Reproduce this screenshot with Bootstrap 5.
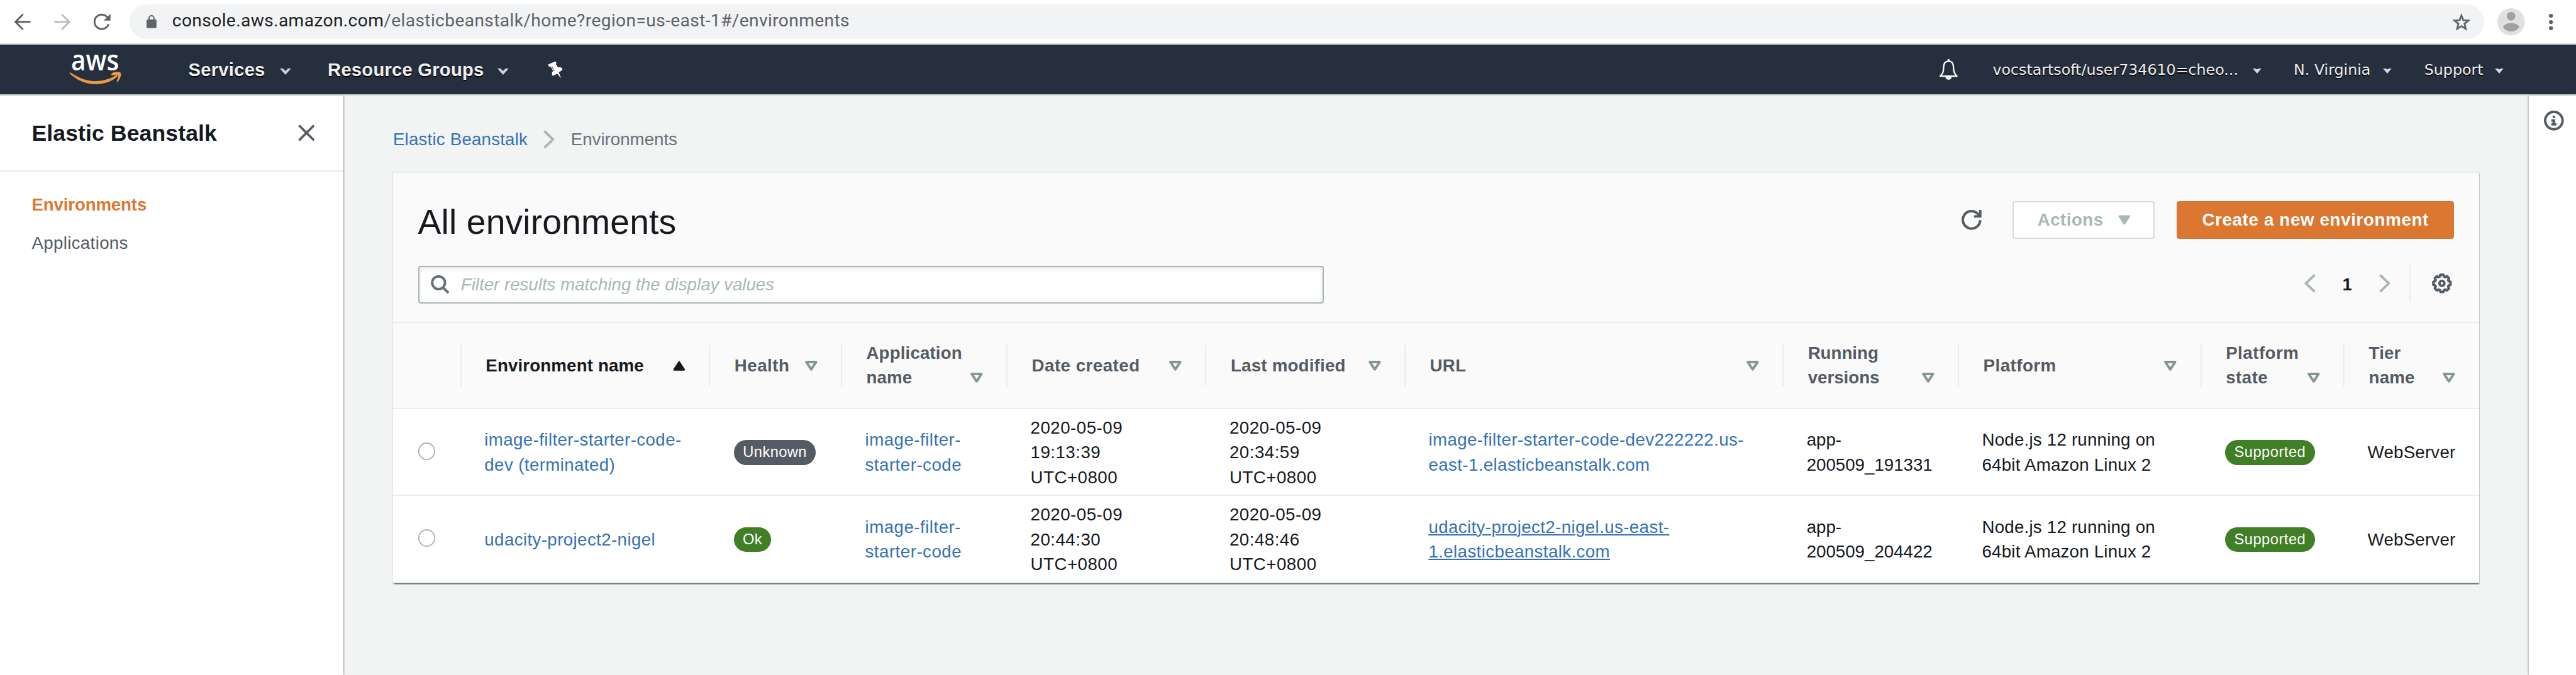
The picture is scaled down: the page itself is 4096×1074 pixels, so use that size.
<!DOCTYPE html>
<html lang="en">
<head>
<meta charset="utf-8">
<title>Elastic Beanstalk - Environments</title>
<link href="https://cdn.jsdelivr.net/npm/bootstrap@5.3.0/dist/css/bootstrap.min.css" rel="stylesheet">
<style>
/* 1rem = ten design pixels */
html{font-size:9.8889px}
body{font:2.8rem/4rem "Liberation Sans",Arial,sans-serif;color:#16191f;background:#f2f3f3;height:100vh;overflow:hidden}
svg{display:block;flex:none;overflow:visible}
a{color:#3571b8;text-decoration:none}
.nw{white-space:nowrap}
.chrome-bar{height:7.2rem;border-bottom:2px solid #d9dce0;background:#fff;padding-left:2.3rem}
.omnibox{margin-left:3rem;width:378.6rem;height:5.6rem;border-radius:2.8rem;background:#f1f3f4;padding-left:2.8rem}
.address{font-family:Roboto,sans-serif;font-size:2.85rem;letter-spacing:.037rem;color:#5f6368;margin-left:2.5rem;padding-bottom:.3rem}
.address b{font-weight:400;color:#202124}
.aws-nav{height:8.2rem;background:#262f3e;border-bottom:2px solid #ced2d0;color:#eee;text-shadow:0 .2rem 0 #000}
.nav-main{font-weight:700;font-size:2.95rem;letter-spacing:.025rem;padding-top:.3rem}
.nav-side{font:2.4rem/4rem "DejaVu Sans",Verdana,sans-serif;padding-top:.2rem}
.side{width:55.2rem;background:#fff;box-shadow:.1rem 0 .2rem #8d9696;z-index:1}
.side-head{height:12.2rem;border-bottom:2px solid #eaeded;padding:0 4.6rem 0 5.1rem}
.side-title{font-size:3.6rem;font-weight:700;letter-spacing:.01rem;padding-top:.3rem}
.side-list{padding:3.3rem 5.1rem;gap:2.2rem}
.side-list .on{color:#dc7732;font-weight:700;letter-spacing:-.015rem}
.side-list .off{color:#545b64;letter-spacing:.035rem}
.tools{width:7.6rem;background:#fff;box-shadow:-.1rem 0 .3rem #8d9696;padding:2.4rem 0 0 2.4rem}
.content{padding:5rem 8rem 0 8rem}
.crumbs{height:4rem}
.panel{margin-top:3.2rem;height:66.2rem;background:#fff;border-top:2px solid #eaeded;box-shadow:0 .2rem .1rem rgba(0,28,36,.4),.15rem .1rem .1rem rgba(0,28,36,.15),-.15rem .1rem .1rem rgba(0,28,36,.15)}
.panel-top{height:24.2rem;background:#fafafa;border-bottom:2px solid #eaeded;padding:4.6rem 4rem 0 4rem}
.title-row{height:6rem}
.panel-title{font-size:5.6rem;line-height:6rem;font-weight:400;margin:0;padding-top:.8rem;letter-spacing:.01rem}
.xbtn{height:6rem;border-radius:.4rem;font-weight:700;font-size:2.8rem;letter-spacing:.05rem}
.btn-act{width:22.8rem;border:2px solid #d5dbdb;background:#fff;color:#aab7b8;padding-left:3.8rem}
.btn-new{width:44.6rem;background:#dc7732;color:#fff;margin-left:3.6rem;letter-spacing:.068rem}
.filter{width:145.7rem;height:6rem;border:2px solid #aab7b8;border-radius:.4rem;background:#fff;box-shadow:inset 0 .2rem .6rem rgba(0,0,0,.1);padding-left:1.9rem;color:#aab7b8;font-style:italic}
.grid{width:335.4rem;table-layout:fixed;border-collapse:separate;border-spacing:0}
.grid th{height:13.8rem;padding:0;background:#fafafa;border-bottom:2px solid #eaeded;color:#545b64;letter-spacing:.015rem}
.cell-h{height:6.8rem;border-right:2px solid #eaeded;padding:0 3.8rem 0 3.9rem;display:flex;align-items:center;white-space:nowrap}
.grid th:last-child .cell-h{border:0}
.cell-h>div{flex:1;display:flex;align-items:flex-end;justify-content:space-between}
.cell-h svg{margin-bottom:1.2rem}
.grid td{height:14rem;padding:.2rem 0 0 3.7rem;border-bottom:2px solid #eaeded;vertical-align:middle;white-space:nowrap;letter-spacing:.04rem}
.grid td:first-child{padding:0 0 .2rem 4rem}
.grid .t0{letter-spacing:0}
.grid .t2{letter-spacing:.022rem}
.grid .t5{letter-spacing:.05rem}
.pick{width:2.8rem;height:2.8rem;border:2px solid #aab7b8;border-radius:50%}
.pill{display:flex;align-items:center;justify-content:center;height:4rem;border-radius:2rem;margin-left:.1rem;color:#fff;font-size:2.4rem;background:#417f26}
.pill.gray{background:#545b64}
.under{text-decoration:underline;text-decoration-thickness:2px;text-underline-offset:.25rem}
</style>
<script src="https://cdn.jsdelivr.net/npm/bootstrap@5.3.0/dist/js/bootstrap.bundle.min.js"></script>
</head>
<body class="d-flex flex-column">
<svg width="0" height="0" class="position-absolute">
  <symbol id="down" viewBox="0 0 20 16"><path d="M2.2 2h15.6L10 14z" fill="none" stroke="#879596" stroke-width="4" stroke-linejoin="round"/></symbol>
  <symbol id="caret" viewBox="0 0 18 10"><path d="M0 0h5l4 4 4-4h5L9 10z" fill="#d3d3d3"/></symbol>
  <symbol id="caret-s" viewBox="0 0 14 8"><path d="M0 0h4.500l1 1h3l1-1H14L7 8z" fill="#d8d8d8"/></symbol>
  <symbol id="next" viewBox="0 0 18 30"><path d="M1.500 1.500L15.500 15 1.500 28.500" fill="none" stroke="#aab7b8" stroke-width="4"/></symbol>
</svg>

<header class="chrome-bar d-flex align-items-center flex-shrink-0">
  <svg style="width:2.600rem;height:2.600rem" viewBox="0 0 26 26" fill="none" stroke="#5f6368" stroke-width="3" stroke-linecap="round"><path d="M24.500 13H2M13 1.500L1.600 13 13 24.500"/></svg>
  <svg style="width:2.600rem;height:2.600rem;margin-left:3.800rem" viewBox="0 0 26 26" fill="none" stroke="#bbbdbf" stroke-width="3" stroke-linecap="round"><path d="M1.500 13H24M13 1.500L24.400 13 13 24.500"/></svg>
  <svg style="width:2.700rem;height:2.600rem;margin-left:3.800rem" viewBox="0 0 27 26"><path d="M23.500 17.500A11.600 11.600 0 1 1 21.500 5" fill="none" stroke="#5f6368" stroke-width="3" stroke-linecap="round"/><path d="M27 0v11H16z" fill="#5f6368"/></svg>
  <div class="omnibox d-flex align-items-center">
    <svg style="width:1.600rem;height:2.100rem" viewBox="0 0 16 21"><rect y="7" width="16" height="14" rx="1.800" fill="#5f6368"/><path d="M4 8V5a4 4 0 0 1 8 0v3" fill="none" stroke="#5f6368" stroke-width="2"/></svg>
    <div class="address nw"><b>console.aws.amazon.com</b>/elasticbeanstalk/home?region=us-east-1#/environments</div>
    <svg class="ms-auto" style="width:3rem;height:2.800rem;margin-right:2.100rem" viewBox="0 0 30 28"><path d="M15 3.800l3 7.400 8.200.6-6.300 5.200 2 8L15 20.800 8.100 25l2-8-6.300-5.200 8.200-.6z" fill="none" stroke="#5f6368" stroke-width="2.800"/></svg>
  </div>
  <svg style="width:4.400rem;height:4.400rem;margin-left:2.200rem" viewBox="0 0 44 44"><circle cx="22" cy="22" r="22" fill="#e0e0e0"/><circle cx="22" cy="13" r="7" fill="#a1a1a1"/><path d="M9 30c4-8 22-8 26 0-5 10-21 10-26 0z" fill="#a1a1a1"/></svg>
  <svg style="width:.640rem;height:2.640rem;margin-left:3.880rem" viewBox="0 0 6.400 26.400" fill="#5f6368"><circle cx="3.200" cy="3.200" r="3.200"/><circle cx="3.200" cy="13.200" r="3.200"/><circle cx="3.200" cy="23.200" r="3.200"/></svg>
</header>

<nav class="aws-nav d-flex align-items-center flex-shrink-0">
  <svg style="width:8.200rem;height:5rem;margin-left:11.200rem" viewBox="0 0 82 50"><text x="2" y="26" textLength="77" lengthAdjust="spacingAndGlyphs" font-family="Open Sans" font-weight="600" font-size="45.500" fill="#fff" style="text-shadow:none">aws</text><path d="M1 31C16 41 28 45 42 45c12 0 24-4 32-9 2-1 3 1 2 2-8 8-22 12-35 12C25 50 11 43 0 33c-.8-1 0-2.400 1-2zM67 33c4-3 13-4 15-1 1 3-1 10-5 14-1 1-2 .4-1.500-.6 1-3 3-7.400 2-9-1-1.500-6-1-9-.7-1.500.2-2.500-1.700-1.500-2.700z" transform="translate(0,-1.500)" fill="#e99b3f"/></svg>
  <div class="nav-main nw" style="margin-left:10.900rem;width:14.700rem">Services</div>
  <svg style="width:1.800rem;height:1rem;margin-top:.6rem"><use href="#caret"/></svg>
  <div class="nav-main nw" style="margin-left:5.900rem;width:27.300rem">Resource Groups</div>
  <svg style="width:1.800rem;height:1rem;margin-top:.6rem"><use href="#caret"/></svg>
  <svg style="width:2.400rem;height:2.600rem;margin-left:6.300rem" viewBox="0 0 24 26"><path d="M0 5L11 0l3 1-1 3 3.500 5.500c2.500-.7 5.500-.5 7.200 2.200L23 14l-5.500 3.500L21 25l-.5 1-5-6.500L8 23l-1-1.500c-1-2.500 0-4.500 1.500-6.500L5 8.500 2 8z" fill="#fff"/><path d="M6.500 8l4 7" stroke="#262f3e" stroke-width="1"/></svg>
  <svg class="ms-auto" style="width:3.100rem;height:3.400rem" viewBox="0 0 31 34"><path d="M2 27.500c5-5 5.500-8 5.500-14C7.500 7 10.500 3.500 15.500 3.500S23.500 7 23.500 13.500c0 6 .5 9 5.500 14z" fill="none" stroke="#fff" stroke-width="2.300" stroke-linejoin="round"/><circle cx="15.500" cy="2" r="2" fill="#fff"/><path d="M10.500 28h10c0 7-10 7-10 0z" fill="#fff"/></svg>
  <div class="nav-side nw" style="margin-left:5.500rem;width:41.800rem">vocstartsoft/user734610=cheo...</div>
  <svg style="width:1.400rem;height:.8rem;margin-top:.4rem"><use href="#caret-s"/></svg>
  <div class="nav-side nw" style="margin-left:5.200rem;width:14.400rem">N. Virginia</div>
  <svg style="width:1.400rem;height:.8rem;margin-top:.4rem"><use href="#caret-s"/></svg>
  <div class="nav-side nw" style="margin-left:5.200rem;width:11.400rem">Support</div>
  <svg style="width:1.400rem;height:.8rem;margin:.4rem 11.600rem 0 0"><use href="#caret-s"/></svg>
</nav>

<main class="d-flex flex-grow-1">
  <aside class="side flex-shrink-0">
    <div class="side-head d-flex align-items-center justify-content-between">
      <div class="side-title nw">Elastic Beanstalk</div>
      <svg style="width:2.700rem;height:2.700rem" viewBox="0 0 27 27"><path d="M1.500 1.500l24 24M25.500 1.500l-24 24" stroke="#545b64" stroke-width="3.800"/></svg>
    </div>
    <div class="side-list d-flex flex-column">
      <a class="on" href="#">Environments</a>
      <a class="off" href="#">Applications</a>
    </div>
  </aside>

  <section class="content flex-grow-1">
    <div class="crumbs d-flex align-items-center nw">
      <a href="#" style="width:24.200rem;margin-top:.1rem;letter-spacing:.02rem">Elastic Beanstalk</a>
      <svg style="width:1.800rem;height:3rem"><use href="#next"/></svg>
      <span style="margin:.1rem 0 0 2.600rem;color:#687078">Environments</span>
    </div>

    <div class="panel">
      <div class="panel-top">
        <div class="title-row d-flex align-items-center">
          <h1 class="panel-title nw">All environments</h1>
          <svg class="ms-auto" style="width:3.200rem;height:3.200rem;margin-right:5rem" viewBox="0 0 32 32" fill="none" stroke="#545b64" stroke-width="4"><path d="M30 16.500A14 14 0 1 1 26 6.200l3 4.300"/><path d="M30 0v10.500H20"/></svg>
          <div class="xbtn btn-act d-flex align-items-center"><span style="width:13rem">Actions</span><svg style="width:2rem;height:1.600rem" viewBox="0 0 20 16"><path d="M2 2h16L10 14z" fill="#aab7b8" stroke="#aab7b8" stroke-width="3" stroke-linejoin="round"/></svg></div>
          <div class="xbtn btn-new d-flex align-items-center justify-content-center"><span class="nw">Create a new environment</span></div>
        </div>
        <div class="d-flex align-items-center" style="margin-top:4.400rem">
          <div class="filter d-flex align-items-center">
            <svg style="width:3rem;height:3rem;margin-right:1.800rem" viewBox="0 0 30 30" fill="none" stroke="#687078" stroke-width="4"><circle cx="12.500" cy="12" r="10.300"/><path d="M19.500 19.500l9 9"/></svg>
            <span class="nw">Filter results matching the display values</span>
          </div>
          <div class="d-flex align-items-center ms-auto" style="height:6rem;margin-top:-.4rem">
            <svg style="width:1.800rem;height:3rem;transform:scaleX(-1)"><use href="#next"/></svg>
            <b class="text-center" style="width:10.200rem;padding-top:.4rem">1</b>
            <svg style="width:1.800rem;height:3rem"><use href="#next"/></svg>
            <div style="margin:0 3.400rem 0 3.100rem;width:2px;height:6rem;background:#eaeded"></div>
            <svg style="width:3.200rem;height:3.200rem;margin-right:.4rem" viewBox="-16 -16 32 32" fill="none" stroke="#545b64" stroke-width="4" stroke-linejoin="round"><path d="M13.800 2.400 10.900 3.400 10 5.300 11.500 8 8 11.500 5.300 10 3.400 10.900 2.400 13.800-2.400 13.800-3.400 10.900-5.300 10-8 11.500-11.500 8-10 5.300-10.900 3.400-13.800 2.400-13.800-2.400-10.900-3.400-10-5.300-11.500-8-8-11.500-5.300-10-3.400-10.900-2.400-13.800 2.400-13.800 3.400-10.900 5.300-10 8-11.500 11.500-8 10-5.300 10.900-3.400 13.800-2.400z"/><circle r="4"/></svg>
          </div>
        </div>
      </div>
      <table class="grid">
        <colgroup><col style="width:11rem"><col style="width:40rem"><col style="width:21.200rem"><col style="width:26.600rem"><col style="width:32rem"><col style="width:32rem"><col style="width:60.800rem"><col style="width:28.200rem"><col style="width:39rem"><col style="width:23rem"><col style="width:21.600rem"></colgroup>
        <thead><tr>
          <th><div class="cell-h"></div></th>
          <th style="color:#16191f"><div class="cell-h"><div><span>Environment name</span><svg style="width:2rem;height:1.600rem" viewBox="0 0 20 16"><path d="M2 14.500h16L10 2z" fill="#16191f" stroke="#16191f" stroke-width="3" stroke-linejoin="round"/></svg></div></div></th>
          <th class="t5"><div class="cell-h"><div><span>Health</span><svg style="width:2rem;height:1.600rem"><use href="#down"/></svg></div></div></th>
          <th><div class="cell-h"><div><span>Application<br>name</span><svg style="width:2rem;height:1.600rem"><use href="#down"/></svg></div></div></th>
          <th class="t5"><div class="cell-h"><div><span>Date created</span><svg style="width:2rem;height:1.600rem"><use href="#down"/></svg></div></div></th>
          <th class="t2"><div class="cell-h"><div><span>Last modified</span><svg style="width:2rem;height:1.600rem"><use href="#down"/></svg></div></div></th>
          <th class="t5"><div class="cell-h"><div><span>URL</span><svg style="width:2rem;height:1.600rem"><use href="#down"/></svg></div></div></th>
          <th class="t0"><div class="cell-h"><div><span>Running<br>versions</span><svg style="width:2rem;height:1.600rem"><use href="#down"/></svg></div></div></th>
          <th class="t5"><div class="cell-h"><div><span>Platform</span><svg style="width:2rem;height:1.600rem"><use href="#down"/></svg></div></div></th>
          <th class="t5"><div class="cell-h"><div><span>Platform<br>state</span><svg style="width:2rem;height:1.600rem"><use href="#down"/></svg></div></div></th>
          <th><div class="cell-h"><div><span>Tier<br>name</span><svg style="width:2rem;height:1.600rem"><use href="#down"/></svg></div></div></th>
        </tr></thead>
        <tbody>
        <tr>
          <td><div class="pick"></div></td>
          <td><a href="#">image-filter-starter-code-<br>dev (terminated)</a></td>
          <td><div class="pill gray" style="width:13.200rem"><span>Unknown</span></div></td>
          <td class="t5"><a href="#">image-filter-<br>starter-code</a></td>
          <td class="t5">2020-05-09<br>19:13:39<br>UTC+0800</td>
          <td class="t5">2020-05-09<br>20:34:59<br>UTC+0800</td>
          <td><a href="#">image-filter-starter-code-dev222222.us-<br>east-1.elasticbeanstalk.com</a></td>
          <td class="t0">app-<br>200509_191331</td>
          <td class="t2">Node.js 12 running on<br>64bit Amazon Linux 2</td>
          <td class="t5"><div class="pill" style="width:14.400rem"><span>Supported</span></div></td>
          <td class="t2">WebServer</td>
        </tr>
        <tr>
          <td><div class="pick"></div></td>
          <td><a href="#">udacity-project2-nigel</a></td>
          <td><div class="pill" style="width:6rem"><span>Ok</span></div></td>
          <td class="t5"><a href="#">image-filter-<br>starter-code</a></td>
          <td class="t5">2020-05-09<br>20:44:30<br>UTC+0800</td>
          <td class="t5">2020-05-09<br>20:48:46<br>UTC+0800</td>
          <td><a class="under" href="#">udacity-project2-nigel.us-east-<br>1.elasticbeanstalk.com</a></td>
          <td class="t0">app-<br>200509_204422</td>
          <td class="t2">Node.js 12 running on<br>64bit Amazon Linux 2</td>
          <td class="t5"><div class="pill" style="width:14.400rem"><span>Supported</span></div></td>
          <td class="t2">WebServer</td>
        </tr>
        </tbody>
      </table>
    </div>
  </section>

  <aside class="tools flex-shrink-0">
    <svg style="width:3.200rem;height:3.200rem" viewBox="0 0 32 32"><circle cx="16" cy="16" r="14" fill="none" stroke="#545b64" stroke-width="4"/><path d="M14 8h4v4h-4zM12 14h6v6h2v4h-8v-4h2v-2h-2z" fill="#545b64"/></svg>
  </aside>
</main>
</body>
</html>
